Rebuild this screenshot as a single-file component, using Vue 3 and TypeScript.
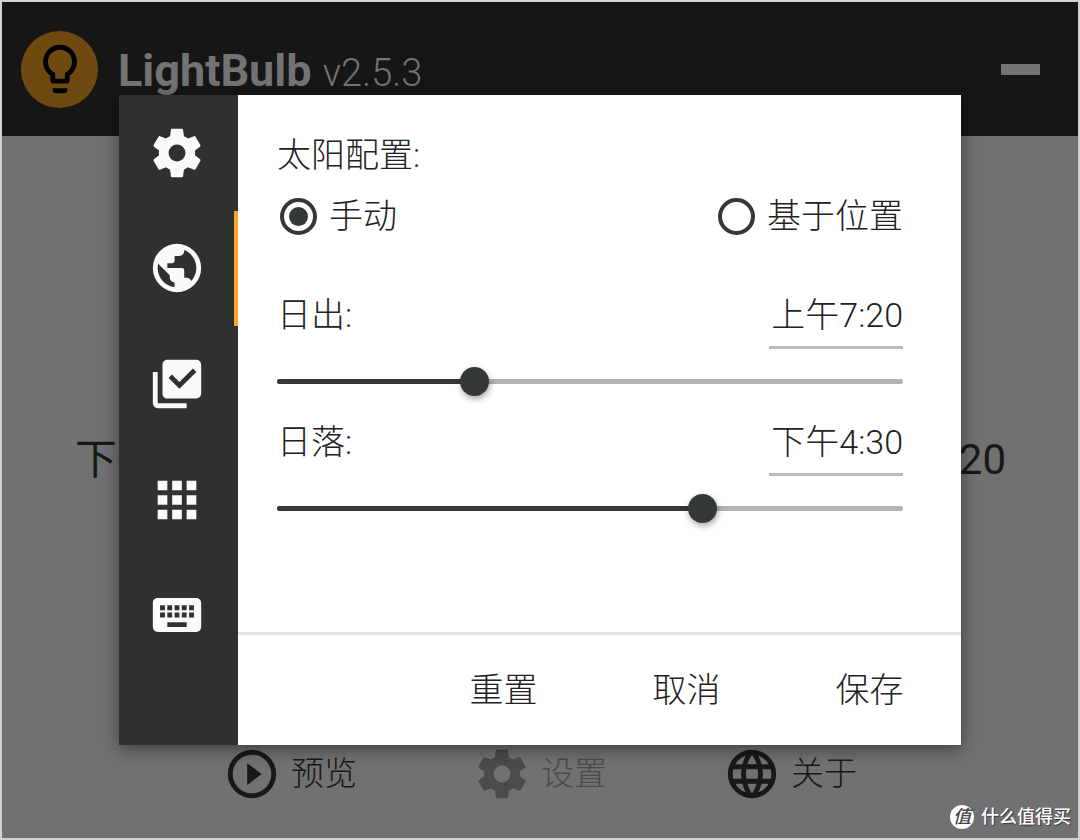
<script setup lang="ts">
import { computed, ref } from 'vue'

interface Icon {
  id: string
  label: string
  path: string
}

const gear =
  'M12,15.5A3.5,3.5 0 0,1 8.5,12A3.5,3.5 0 0,1 12,8.5A3.5,3.5 0 0,1 15.5,12A3.5,3.5 0 0,1 12,15.5M19.43,12.97C19.47,12.65 19.5,12.33 19.5,12C19.5,11.67 19.47,11.34 19.43,11L21.54,9.37C21.73,9.22 21.78,8.95 21.66,8.73L19.66,5.27C19.54,5.05 19.27,4.96 19.05,5.05L16.56,6.05C16.04,5.66 15.5,5.32 14.87,5.07L14.5,2.42C14.46,2.18 14.25,2 14,2H10C9.75,2 9.54,2.18 9.5,2.42L9.13,5.07C8.5,5.32 7.96,5.66 7.44,6.05L4.95,5.05C4.73,4.96 4.46,5.05 4.34,5.27L2.34,8.73C2.21,8.95 2.27,9.22 2.46,9.37L4.57,11C4.53,11.34 4.5,11.67 4.5,12C4.5,12.33 4.53,12.65 4.57,12.97L2.46,14.63C2.27,14.78 2.21,15.05 2.34,15.27L4.34,18.73C4.46,18.95 4.73,19.03 4.95,18.95L7.44,17.94C7.96,18.34 8.5,18.68 9.13,18.93L9.5,21.58C9.54,21.82 9.75,22 10,22H14C14.25,22 14.46,21.82 14.5,21.58L14.87,18.93C15.5,18.67 16.04,18.34 16.56,17.94L19.05,18.95C19.27,19.03 19.54,18.95 19.66,18.73L21.66,15.27C21.78,15.05 21.73,14.78 21.54,14.63L19.43,12.97Z'
const bulb =
  'M12,2A7,7 0 0,1 19,9C19,11.38 17.81,13.47 16,14.74V17A1,1 0 0,1 15,18H9A1,1 0 0,1 8,17V14.74C6.19,13.47 5,11.38 5,9A7,7 0 0,1 12,2M9,21V20H15V21A1,1 0 0,1 14,22H10A1,1 0 0,1 9,21M12,4A5,5 0 0,0 7,9C7,11.05 8.23,12.81 10,13.58V16H14V13.58C15.77,12.81 17,11.05 17,9A5,5 0 0,0 12,4Z'

const tabs: Icon[] = [
  { id: 'general', label: '常规', path: gear },
  {
    id: 'location',
    label: '位置',
    path: 'M17.9,17.39C17.64,16.59 16.89,16 16,16H15V13A1,1 0 0,0 14,12H8V10H10A1,1 0 0,0 11,9V7H13A2,2 0 0,0 15,5V4.59C17.93,5.77 20,8.64 20,12C20,14.08 19.2,15.97 17.9,17.39M11,19.93C7.05,19.44 4,16.08 4,12C4,11.38 4.08,10.78 4.21,10.21L9,15V16A2,2 0 0,0 11,18M12,2A10,10 0 0,0 2,12A10,10 0 0,0 12,22A10,10 0 0,0 22,12A10,10 0 0,0 12,2Z',
  },
  {
    id: 'advanced',
    label: '高级',
    path: 'M22,16A2,2 0 0,1 20,18H8C6.89,18 6,17.1 6,16V4C6,2.89 6.89,2 8,2H20A2,2 0 0,1 22,4V16M16,20V22H4A2,2 0 0,1 2,20V7H4V20H16M13,14L20,7L18.59,5.59L13,11.17L9.91,8.09L8.5,9.5L13,14Z',
  },
  {
    id: 'apps',
    label: '应用',
    path: 'M16,20H20V16H16M16,14H20V10H16M10,8H14V4H10M16,8H20V4H16M10,14H14V10H10M4,14H8V10H4M4,20H8V16H4M10,20H14V16H10M4,8H8V4H4V8Z',
  },
  {
    id: 'hotkeys',
    label: '热键',
    path: 'M19,10H17V8H19M19,13H17V11H19M16,10H14V8H16M16,13H14V11H16M16,17H8V15H16M7,10H5V8H7M7,13H5V11H7M8,11H10V13H8M8,8H10V10H8M11,11H13V13H11M11,8H13V10H11M20,5H4C2.89,5 2,5.89 2,7V17A2,2 0 0,0 4,19H20A2,2 0 0,0 22,17V7C22,5.89 21.1,5 20,5Z',
  },
]

const actions: (Icon & { disabled?: boolean })[] = [
  {
    id: 'preview',
    label: '预览',
    path: 'M12,20C7.59,20 4,16.41 4,12C4,7.59 7.59,4 12,4C16.41,4 20,7.59 20,12C20,16.41 16.41,20 12,20M12,2A10,10 0 0,0 2,12A10,10 0 0,0 12,22A10,10 0 0,0 22,12A10,10 0 0,0 12,2M10,16.5L16,12L10,7.5V16.5Z',
  },
  { id: 'settings', label: '设置', path: gear, disabled: true },
  {
    id: 'about',
    label: '关于',
    path: 'M16.36,14C16.44,13.34 16.5,12.68 16.5,12C16.5,11.32 16.44,10.66 16.36,10H19.74C19.9,10.64 20,11.31 20,12C20,12.69 19.9,13.36 19.74,14M14.59,19.56C15.19,18.45 15.65,17.25 15.97,16H18.92C17.96,17.65 16.43,18.93 14.59,19.56M14.34,14H9.66C9.56,13.34 9.5,12.68 9.5,12C9.5,11.32 9.56,10.65 9.66,10H14.34C14.43,10.65 14.5,11.32 14.5,12C14.5,12.68 14.43,13.34 14.34,14M12,19.96C11.17,18.76 10.5,17.43 10.09,16H13.91C13.5,17.43 12.83,18.76 12,19.96M8,8H5.08C6.03,6.34 7.57,5.06 9.4,4.44C8.8,5.55 8.35,6.75 8,8M5.08,16H8C8.35,17.25 8.8,18.45 9.4,19.56C7.57,18.93 6.03,17.65 5.08,16M4.26,14C4.1,13.36 4,12.69 4,12C4,11.31 4.1,10.64 4.26,10H7.64C7.56,10.66 7.5,11.32 7.5,12C7.5,12.68 7.56,13.34 7.64,14M12,4.03C12.83,5.23 13.5,6.57 13.91,8H10.09C10.5,6.57 11.17,5.23 12,4.03M18.92,8H15.97C15.65,6.75 15.19,5.55 14.59,4.44C16.43,5.07 17.96,6.34 18.92,8M12,2C6.47,2 2,6.5 2,12A10,10 0 0,0 12,22A10,10 0 0,0 22,12A10,10 0 0,0 12,2Z',
  },
]

const activeTab = ref('location')
const mode = ref<'manual' | 'location'>('manual')
const sunrise = ref(440)
const sunset = ref(990)

function format(minutes: number): string {
  const hours = Math.floor(minutes / 60)
  const prefix = hours < 12 ? '上午' : '下午'
  return `${prefix}${hours % 12 || 12}:${String(minutes % 60).padStart(2, '0')}`
}

const times = computed(() => [
  { id: 'sunrise', label: '日出', value: sunrise.value, set: (v: number) => (sunrise.value = v) },
  { id: 'sunset', label: '日落', value: sunset.value, set: (v: number) => (sunset.value = v) },
])
</script>

<template>
  <div class="window">
    <header class="titlebar">
      <span class="logo">
        <svg class="icon" viewBox="0 0 24 24" aria-hidden="true"><path :d="bulb" /></svg>
      </span>
      <h1 class="title">LightBulb <span class="version">v2.5.3</span></h1>
      <button class="minimize" type="button" aria-label="最小化"><span></span></button>
    </header>

    <main class="dashboard">
      <span>{{ format(sunset) }}</span>
      <span>{{ format(sunrise) }}</span>
    </main>

    <footer class="actions">
      <button v-for="a in actions" :key="a.id" class="action" type="button" :disabled="a.disabled">
        <svg class="icon" viewBox="0 0 24 24" aria-hidden="true"><path :d="a.path" /></svg>
        <span>{{ a.label }}</span>
      </button>
    </footer>

    <div class="overlay">
      <section class="dialog" role="dialog" aria-label="设置">
        <nav class="tabs">
          <button
            v-for="t in tabs"
            :key="t.id"
            class="tab"
            :class="{ active: t.id === activeTab }"
            type="button"
            :aria-label="t.label"
            @click="activeTab = t.id"
          >
            <svg class="icon" viewBox="0 0 24 24" aria-hidden="true"><path :d="t.path" /></svg>
          </button>
        </nav>

        <div class="panel">
          <form class="fields" @submit.prevent>
            <fieldset class="modes">
              <legend>太阳配置:</legend>
              <div class="choices">
                <label class="choice">
                  <input v-model="mode" type="radio" name="mode" value="manual" />
                  <span>手动</span>
                </label>
                <label class="choice">
                  <input v-model="mode" type="radio" name="mode" value="location" />
                  <span>基于位置</span>
                </label>
              </div>
            </fieldset>

            <div v-for="t in times" :key="t.id" class="time">
              <div class="time-row">
                <label :for="t.id">{{ t.label }}:</label>
                <input class="time-text" type="text" :value="format(t.value)" :aria-label="t.label" />
              </div>
              <input
                :id="t.id"
                class="slider"
                type="range"
                min="0"
                max="1439"
                :value="t.value"
                :style="{ '--fill': t.value / 1439 }"
                @input="t.set(Number(($event.target as HTMLInputElement).value))"
              />
            </div>
          </form>

          <div class="buttons">
            <button type="button">重置</button>
            <button type="button">取消</button>
            <button type="button">保存</button>
          </div>
        </div>
      </section>
    </div>

    <div class="watermark"><span class="badge">值</span><span>什么值得买</span></div>
  </div>
</template>

<style>
body {
  margin: 0;
}
</style>

<style scoped>
.window,
.window * {
  box-sizing: border-box;
}
.window {
  position: relative;
  display: flex;
  flex-direction: column;
  min-height: 100vh;
  border: 2px solid #d2d3d3;
  background: #717171;
  color: #171919;
  font-family: Roboto, 'Noto Sans CJK SC', sans-serif;
  font-size: 34px;
  font-weight: 300;
  line-height: 40px;
}
button,
input {
  margin: 0;
  padding: 0;
  border: 0;
  background: none;
  color: inherit;
  font: inherit;
}
.icon {
  display: block;
  flex: none;
  width: 58px;
  height: 58px;
  fill: currentColor;
}
.titlebar {
  display: flex;
  align-items: center;
  height: 134px;
  padding: 0 38px 0 19px;
  background: #161616;
}
.logo {
  display: grid;
  place-items: center;
  width: 77px;
  height: 77px;
  border-radius: 50%;
  background: #6f4a10;
  color: #000;
}
.title {
  margin: 6px auto 0 20px;
  color: #737373;
  font-size: 45px;
  font-weight: 700;
  line-height: 56px;
  white-space: nowrap;
}
.version {
  font-size: 38px;
  font-weight: 300;
}
.minimize {
  padding: 10px 0;
}
.minimize span {
  display: block;
  width: 39px;
  height: 11px;
  background: #737373;
}
.dashboard {
  display: flex;
  flex: 1;
  align-items: center;
  justify-content: space-between;
  padding: 38px 72px 0 73px;
  font-size: 42px;
  font-weight: 400;
}
.actions {
  display: flex;
  justify-content: center;
  gap: 116px;
  padding-bottom: 35px;
}
.action {
  display: flex;
  align-items: center;
  gap: 10px;
  font-size: 33px;
}
.action:disabled {
  color: #4b4b4b;
}
.overlay {
  position: absolute;
  inset: 0;
  display: flex;
  padding: 93px 117px;
}
.dialog {
  display: flex;
  flex: 1;
  background: #fff;
  box-shadow: 0 4px 16px rgba(0, 0, 0, 0.45);
}
.tabs {
  display: flex;
  flex-direction: column;
  width: 119px;
  padding-bottom: 72px;
  background: #303030;
  color: #fafafa;
}
.tab {
  display: flex;
  flex: 1;
  align-items: center;
  justify-content: center;
  border-right: 4px solid transparent;
}
.tab.active {
  border-right-color: #f9a825;
}
.panel {
  display: flex;
  flex: 1;
  flex-direction: column;
  color: #222;
}
.fields {
  flex: 1;
  padding: 40px 58px 0 39px;
}
.modes {
  margin: 0 0 59px;
  padding: 0;
  border: 0;
}
.modes legend {
  padding: 0;
}
.choices {
  display: flex;
  justify-content: space-between;
  padding: 21px 0 0 3px;
}
.choice {
  display: flex;
  align-items: center;
  gap: 12px;
}
.choice input {
  display: grid;
  place-items: center;
  width: 37px;
  height: 37px;
  appearance: none;
  border: 4px solid #343838;
  border-radius: 50%;
}
.choice input:checked::before {
  content: '';
  width: 19px;
  height: 19px;
  border-radius: 50%;
  background: #343838;
}
.time {
  margin-bottom: 26px;
}
.time-row {
  display: flex;
  align-items: flex-start;
  justify-content: space-between;
}
.time-text {
  width: 134px;
  height: 54px;
  padding-bottom: 16px;
  border-bottom: 3px solid #bdbdbd;
  line-height: 34px;
  text-align: right;
}
.slider {
  display: block;
  width: 100%;
  height: 29px;
  margin-top: 18px;
  appearance: none;
}
.slider::-webkit-slider-runnable-track {
  height: 5px;
  border-radius: 2px;
  background: linear-gradient(#343838, #343838) no-repeat left / calc(15px + (100% - 29px) * var(--fill)) 100% #b3b3b3;
}
.slider::-webkit-slider-thumb {
  width: 29px;
  height: 29px;
  margin-top: -12px;
  appearance: none;
  border-radius: 50%;
  background: #343838;
  box-shadow: 1px 3px 6px rgba(0, 0, 0, 0.35);
}
.buttons {
  display: flex;
  justify-content: flex-end;
  border-top: 3px solid #e2e2e2;
}
.buttons button {
  width: 183px;
  height: 110px;
}
.watermark {
  position: absolute;
  right: 7px;
  bottom: 8px;
  display: flex;
  align-items: center;
  gap: 7px;
  color: #fff;
  font-size: 18px;
  font-weight: 500;
  line-height: 26px;
  text-shadow: 1px 1px 1px rgba(0, 0, 0, 0.5);
}
.badge {
  width: 24px;
  height: 24px;
  border-radius: 50%;
  background: #fff;
  color: #444;
  font-style: italic;
  line-height: 23px;
  text-align: center;
  text-shadow: none;
}
</style>
